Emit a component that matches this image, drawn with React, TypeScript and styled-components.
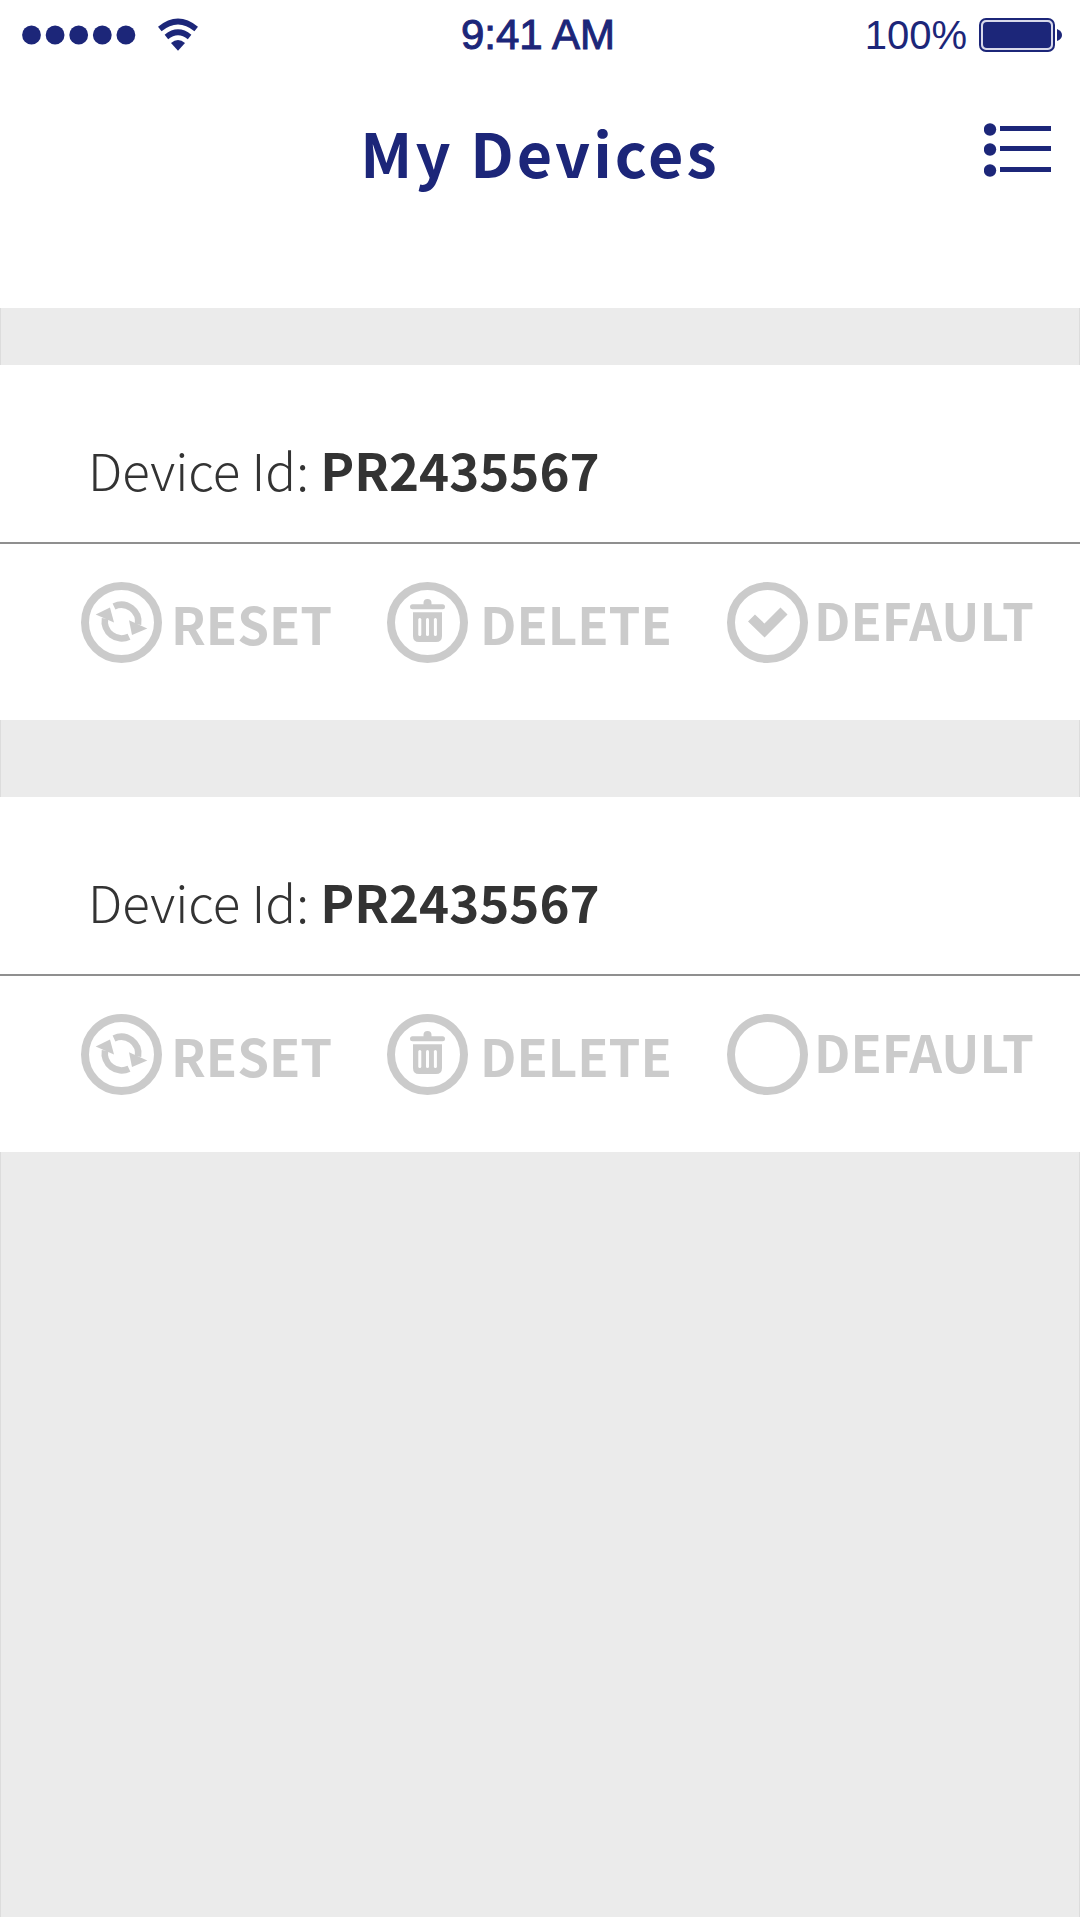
import React, { useState } from "react";
import styled, { createGlobalStyle } from "styled-components";

const navy = "#1c2679";
const muted = "#cbcbcb";
const ink = "#333333";

const GlobalStyle = createGlobalStyle`
  *, *::before, *::after { box-sizing: border-box; }
  html, body, #root { height: 100%; }
  body {
    margin: 0;
    background: #ebebeb;
    font-family: "Noto Sans CJK SC", "Noto Sans", sans-serif;
    color: ${ink};
  }
`;

const Screen = styled.div`
  min-height: 100%;
  display: flex;
  flex-direction: column;
`;

const Header = styled.header`
  background: #ffffff;
  color: ${navy};
  padding-bottom: 112px;
`;

const StatusBar = styled.div`
  display: grid;
  grid-template-columns: 1fr auto 1fr;
  align-items: center;
  height: 70px;
  padding: 0 18px 0 14px;
  font-family: "Liberation Sans", Arial, sans-serif;
  line-height: 48px;
`;

const StatusGroup = styled.div<{ $end?: boolean }>`
  display: flex;
  align-items: center;
  justify-content: ${(p) => (p.$end ? "flex-end" : "flex-start")};
  gap: ${(p) => (p.$end ? 12 : 21)}px;
  padding-left: 8px;
  font-size: 40px;
`;

const Clock = styled.time`
  font-size: 42px;
  -webkit-text-stroke: 1px ${navy};
`;

const TitleBar = styled.div`
  display: grid;
  grid-template-columns: 1fr auto 1fr;
  align-items: center;
  padding: 38px 28px 0;
`;

const Title = styled.h1`
  grid-column: 2;
  margin: 0;
  font-size: 61px;
  font-weight: 700;
  line-height: 88px;
  letter-spacing: 3px;
`;

const MenuButton = styled.button`
  justify-self: end;
  display: flex;
  padding: 0;
  border: 0;
  background: none;
  color: inherit;
  cursor: pointer;
`;

const DeviceList = styled.main`
  flex: 1;
  border: 1px solid #dcdcdc;
  border-width: 0 1px;
  padding-top: 57px;
  display: flex;
  flex-direction: column;
  gap: 77px;
`;

const Card = styled.section`
  margin: 0 -1px;
  background: #ffffff;
`;

const DeviceName = styled.h2`
  margin: 0;
  padding: 74px 88px 43px;
  border-bottom: 2px solid #8f8f8f;
  font-size: 51px;
  font-weight: 300;
  line-height: 60px;
`;

const DeviceId = styled.strong`
  font-weight: 700;
`;

const Actions = styled.div`
  display: grid;
  grid-template-columns: 306fr 340fr 353fr;
  padding: 38px 0 57px 81px;
`;

const ActionButton = styled.button<{ $gap: number }>`
  display: flex;
  align-items: center;
  gap: ${(p) => p.$gap}px;
  height: 81px;
  padding: 0;
  border: 0;
  background: none;
  color: ${muted};
  font: inherit;
  font-size: 51px;
  font-weight: 700;
  line-height: 60px;
  cursor: pointer;
`;

const DefaultChoice = styled(ActionButton).attrs({ as: "label" })``;

const RaisedText = styled.span`
  padding-bottom: 8px;
`;

const RadioBox = styled.span`
  display: grid;
  > * { grid-area: 1 / 1; }
`;

const Radio = styled.input`
  appearance: none;
  width: 81px;
  height: 81px;
  margin: 0;
  border: 8px solid ${muted};
  border-radius: 50%;
  cursor: pointer;
`;

const CheckMark = styled.svg`
  pointer-events: none;
`;

const SignalDots = () => (
  <svg width="114" height="20" viewBox="0 0 114 20" fill="currentColor" aria-hidden="true">
    {[0, 1, 2, 3, 4].map((i) => (
      <circle key={i} cx={9.5 + i * 23.6} cy="10" r="9.4" />
    ))}
  </svg>
);

const WifiIcon = () => (
  <svg width="42" height="34" viewBox="0 0 42 34" aria-hidden="true">
    <g fill="none" stroke="currentColor" strokeWidth="5.6">
      <path d="M2.8 11 Q21 -4 39.2 11" />
      <path d="M9.4 19 Q21 9.5 32.6 19" />
    </g>
    <path d="M14 25 Q21 18.8 28 25 L21 32.7 Z" fill="currentColor" />
  </svg>
);

const BatteryIcon = () => (
  <svg width="83" height="34" viewBox="0 0 83 34" aria-hidden="true">
    <rect x="1" y="1" width="74" height="32" rx="6" fill="#d8d9ea" stroke="currentColor" strokeWidth="2" />
    <rect x="4" y="4" width="68" height="26" rx="4" fill="currentColor" />
    <path d="M78 11 Q83 13 83 17 Q83 21 78 23 Z" fill="currentColor" />
  </svg>
);

const ListIcon = () => (
  <svg width="68" height="58" viewBox="0 0 68 58" fill="currentColor" aria-hidden="true">
    {[6.5, 26.5, 47.5].map((y) => (
      <g key={y}>
        <circle cx="6" cy={y} r="6.2" />
        <rect x="16" y={y - 3.5} width="51" height="5" />
      </g>
    ))}
  </svg>
);

const ResetIcon = () => (
  <svg width="81" height="81" viewBox="0 0 81 81" aria-hidden="true">
    <circle cx="40.5" cy="40.5" r="36.5" fill="none" stroke="currentColor" strokeWidth="8" />
    <path d="M33 24.4 A17 17 0 0 1 57 42.5" fill="none" stroke="currentColor" strokeWidth="6.6" />
    <path d="M48 54.8 A17 17 0 0 1 24 36.5" fill="none" stroke="currentColor" strokeWidth="6.6" />
    <path d="M48 38.3 L66.3 46.5 L51 53 Z" fill="currentColor" />
    <path d="M14.7 32.4 L29 25.6 L33 40.5 Z" fill="currentColor" />
  </svg>
);

const TrashIcon = () => (
  <svg width="81" height="81" viewBox="0 0 81 81" aria-hidden="true">
    <circle cx="40.5" cy="40.5" r="36.5" fill="none" stroke="currentColor" strokeWidth="8" />
    <g fill="currentColor">
      <path d="M36.5 23 V21 A4 4 0 0 1 44.5 21 V23 Z" />
      <rect x="23" y="22.3" width="35" height="5" rx="2.5" />
      <path d="M26 30.3 H55 V54 Q55 60 49 60 H32 Q26 60 26 54 Z" />
    </g>
    <g stroke="#ffffff" strokeWidth="3" strokeLinecap="round">
      <path d="M32.8 37.5 V52.5" />
      <path d="M40.5 37.5 V52.5" />
      <path d="M48.4 37.5 V52.5" />
    </g>
  </svg>
);

const devices = [
  { key: "first", id: "PR2435567" },
  { key: "second", id: "PR2435567" },
];

export default function App() {
  const [selected, setSelected] = useState("first");

  return (
    <>
      <GlobalStyle />
      <Screen>
        <Header>
          <StatusBar>
            <StatusGroup>
              <SignalDots />
              <WifiIcon />
            </StatusGroup>
            <Clock>9:41 AM</Clock>
            <StatusGroup $end>
              <span>100%</span>
              <BatteryIcon />
            </StatusGroup>
          </StatusBar>
          <TitleBar>
            <Title>My Devices</Title>
            <MenuButton type="button" aria-label="Menu">
              <ListIcon />
            </MenuButton>
          </TitleBar>
        </Header>
        <DeviceList>
          {devices.map((device) => (
            <Card key={device.key}>
              <DeviceName>
                Device Id: <DeviceId>{device.id}</DeviceId>
              </DeviceName>
              <Actions>
                <ActionButton type="button" $gap={9}>
                  <ResetIcon />
                  RESET
                </ActionButton>
                <ActionButton type="button" $gap={12}>
                  <TrashIcon />
                  DELETE
                </ActionButton>
                <DefaultChoice $gap={6}>
                  <RadioBox>
                    <Radio
                      type="radio"
                      name="default-device"
                      checked={selected === device.key}
                      onChange={() => setSelected(device.key)}
                    />
                    {selected === device.key && (
                      <CheckMark width="81" height="81" viewBox="0 0 81 81" aria-hidden="true">
                        <path d="M24.5 36 L37.5 48.5 L57 29" fill="none" stroke={muted} strokeWidth="10" />
                      </CheckMark>
                    )}
                  </RadioBox>
                  <RaisedText>DEFAULT</RaisedText>
                </DefaultChoice>
              </Actions>
            </Card>
          ))}
        </DeviceList>
      </Screen>
    </>
  );
}
